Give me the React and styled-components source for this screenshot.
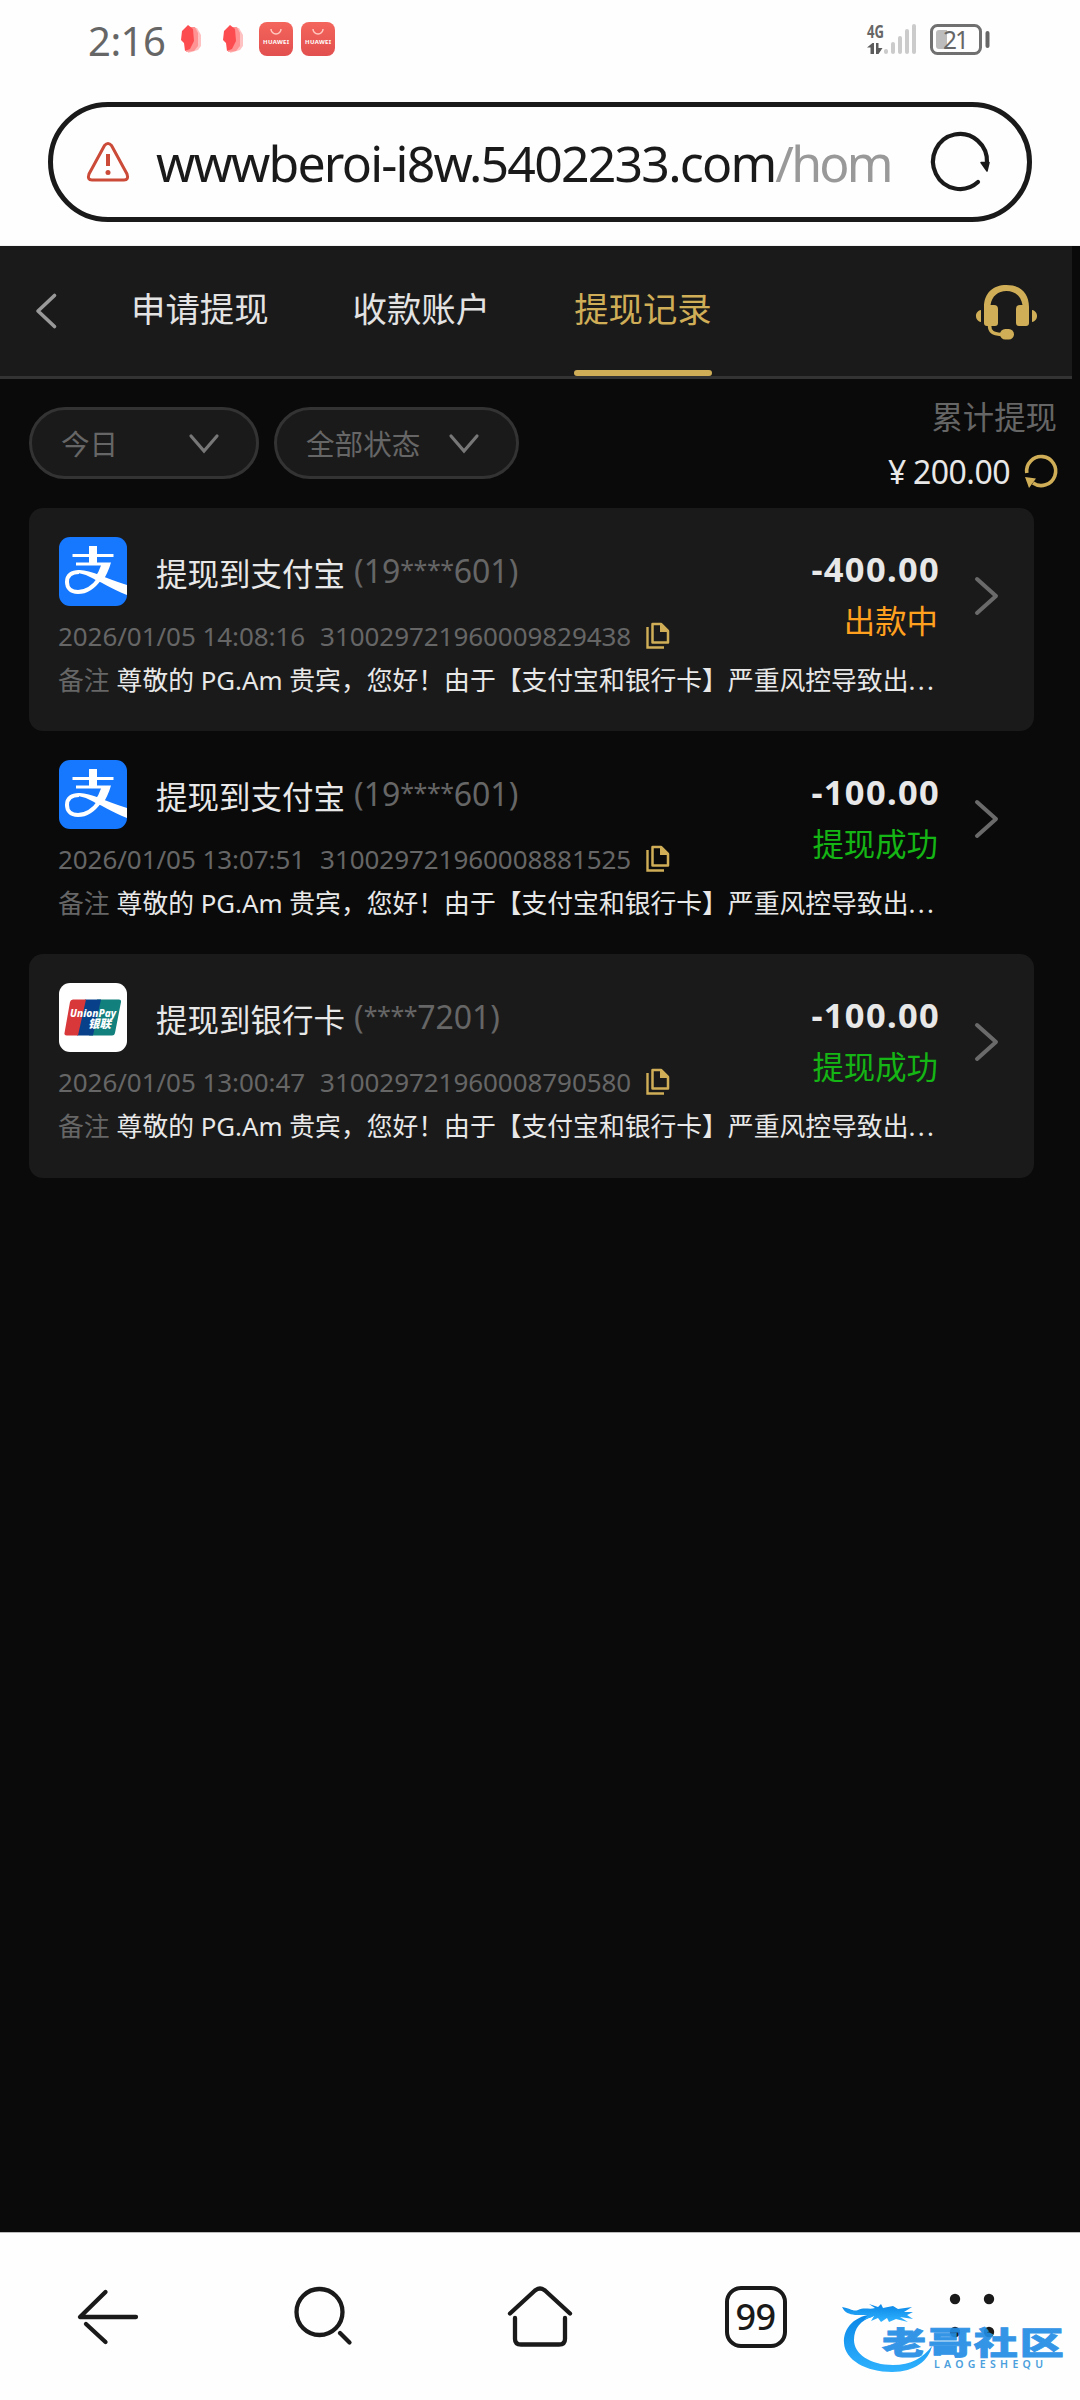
import React from 'react';
import styled, { createGlobalStyle } from 'styled-components';

const GlobalStyle = createGlobalStyle`
  body {
    margin: 0;
    background: #0a0a0a;
    font-family: "Noto Sans", "Noto Sans CJK SC", sans-serif;
  }
  * { box-sizing: border-box; }
  svg { display: block; flex: none; overflow: visible; }
`;

const Screen = styled.div`
  width: 1080px;
  height: 2400px;
  display: flex;
  flex-direction: column;
  overflow: hidden;
  background: #0a0a0a;
`;

/* phone status bar */
const StatusBar = styled.div`
  height: 102px;
  padding: 22px 90px 0 88px;
  display: flex;
  align-items: flex-start;
  background: #fefefe;
`;

const Clock = styled.span`
  width: 93px;
  font-size: 40px;
  line-height: 38px;
  letter-spacing: -0.5px;
  color: #666;
`;

const AppIcons = styled.div`
  display: flex;
  gap: 8px;
  flex: 1;
`;

const Huawei = styled.div`
  width: 34px;
  height: 34px;
  border-radius: 8px;
  background: linear-gradient(#f4655c, #e2504f);
`;

const Battery = styled.div`
  margin-left: 12px;
  display: flex;
`;

/* browser address bar */
const AddressArea = styled.div`
  height: 144px;
  padding: 0 48px;
  background: #fefefe;
  border-bottom: 1px solid #f2f2f2;
`;

const AddressBar = styled.div`
  height: 120px;
  padding: 0 36px 0 33px;
  display: flex;
  align-items: center;
  border: 5px solid #1a1a1a;
  border-radius: 60px;
`;

const Url = styled.div`
  flex: 1;
  margin-left: 26px;
  padding-top: 2px;
  font-size: 50px;
  line-height: 60px;
  white-space: nowrap;
  color: #1a1a1a;
  letter-spacing: -1.8px;
  span { color: #999; letter-spacing: -2.800px; }
`;

/* page header */
const Header = styled.div`
  width: 1072px;
  height: 133px;
  padding: 0 35px;
  display: flex;
  background: #1a1a1a;
  border-bottom: 3px solid #333;
`;

const Tabs = styled.div`
  display: flex;
  gap: 84px;
  margin-left: 73px;
  flex: 1;
`;

const Tab = styled.div`
  height: 130px;
  padding-top: 38px;
  font-size: 34.4px;
  line-height: 50px;
  color: ${props => props.$active ? '#cfae57' : '#e3e3e3'};
  display: flex;
  flex-direction: column;
  justify-content: space-between;
  &::after {
    content: '';
    height: 6px;
    border-radius: 3px;
    background: ${props => props.$active ? '#cfae57' : 'transparent'};
  }
`;

const Filters = styled.div`
  height: 129px;
  padding: 0 23px 0 29px;
  display: flex;
  align-items: flex-start;
`;

const Select = styled.div`
  width: ${props => props.$width}px;
  height: 72px;
  margin: 28px 15px 0 0;
  padding: 1px 37px 0 29px;
  display: flex;
  align-items: center;
  justify-content: space-between;
  background: #1a1a1a;
  border: 3px solid #333;
  border-radius: 36px;
  font-size: 28.6px;
  line-height: 40px;
  color: #666;
`;

const Totals = styled.div`
  margin-left: auto;
  padding-top: 16px;
  display: flex;
  flex-direction: column;
  align-items: flex-end;
`;

const TotalLabel = styled.div`
  font-size: 31.4px;
  line-height: 44px;
  color: #666;
`;

const TotalValue = styled.div`
  height: 40px;
  margin: 13px -1px 0 0;
  display: flex;
  align-items: center;
  font-size: 32px;
  line-height: 40px;
  letter-spacing: -0.5px;
  color: #e8e8e8;
  i { font-style: normal; margin-right: 7px; }
  svg { margin-left: 15px; }
`;

/* records */
const List = styled.div`
  flex: 1;
  padding-left: 29px;
`;

const Card = styled.div`
  width: 1005px;
  height: 223.200px;
  padding: 29px 35px 0 29px;
  display: flex;
  border-radius: 14px;
  background: ${props => props.$shaded ? '#1a1a1a' : 'transparent'};
`;

const Details = styled.div`
  flex: 1;
  min-width: 0;
`;

const TopRow = styled.div`
  display: flex;
  height: 123px;
`;

const Info = styled.div`
  flex: 1;
`;

const TitleRow = styled.div`
  display: flex;
  align-items: center;
  height: 69px;
  padding-left: 1px;
  font-size: 31.5px;
  white-space: nowrap;
  color: #e8e8e8;
`;

const Title = styled.span`
  margin-left: 29px;
`;

const Account = styled.span`
  margin-left: 9px;
  font-size: 32px;
  line-height: 44px;
  color: #666;
`;

const Stars = styled.span`
  font-size: 25px;
  letter-spacing: -0.4px;
  position: relative;
  top: -4px;
`;

const MetaRow = styled.div`
  display: flex;
  align-items: center;
  margin-top: 14px;
  height: 32px;
  font-size: 26px;
  letter-spacing: -0.06px;
  color: #666;
`;

const OrderNo = styled.span`
  margin: 0 15px 0 15px;
`;

const AmountCol = styled.div`
  padding-top: 8px;
  text-align: right;
`;

const Amount = styled.div`
  margin-right: -2px;
  font-size: 34.5px;
  line-height: 48px;
  font-weight: 700;
  letter-spacing: 1.3px;
  color: #e8e8e8;
`;

const Status = styled.div`
  margin-top: 4px;
  font-size: 31.4px;
  line-height: 48px;
  color: ${props => props.$done ? '#14b514' : '#ffa01f'};
`;

const Remark = styled.div`
  font-size: 25.8px;
  line-height: 40px;
  white-space: nowrap;
  color: #e8e8e8;
`;

const RemarkLabel = styled.span`
  color: #666;
  margin-right: 7px;
`;

const Dots = styled.span`
  letter-spacing: 2.400px;
`;

const Arrow = styled.div`
  margin: 39px 0 0 36px;
`;

/* browser toolbar */
const Toolbar = styled.div`
  position: relative;
  height: 168px;
  padding: 50px 74px 0;
  display: flex;
  justify-content: space-between;
  background: #fefefe;
  border-top: 1px solid #bbb;
`;

const TabCount = styled.div`
  width: 62px;
  height: 62px;
  margin: 3px 2px 0 -2px;
  display: flex;
  align-items: center;
  justify-content: center;
  border: 4px solid #1a1a1a;
  border-radius: 16px;
  font-size: 36px;
  font-weight: 500;
  line-height: 40px;
  letter-spacing: -0.7px;
  color: #1a1a1a;
`;

const Watermark = styled.div`
  position: absolute;
  left: 838px;
  top: 68px;
`;

const Leaf = ({ width }) => (
  <svg width={width} height="34" viewBox={`0 0 ${width} 34`}>
    <path d="M11 6L16 6L20 13L20 24L17 28L7 31Z" fill="#ffc2c2" />
    <path d="M9 5L14 5L17 11L17 24L13 29L5 30Z" fill="#ff9292" />
    <path d="M7 3L12 7L13 19L9 27L4 29L3 21L0 18L1 9Z" fill="#fd4c50" />
  </svg>
);

const HuaweiIcon = () => (
  <Huawei>
    <svg width="34" height="34" viewBox="0 0 34 34">
      <path d="M12 7A5 5 0 0 0 22 7" fill="none" stroke="#ffc9c0" strokeWidth="1.5" />
      <text x="4" y="22" fontSize="6" fontWeight="700" fill="#fff" textLength="26">HUAWEI</text>
    </svg>
  </Huawei>
);

const Signal = () => (
  <svg width="52" height="34" viewBox="0 0 52 34">
    <text x="1" y="15.500" fontSize="18" fontWeight="700" fill="#666" textLength="17" lengthAdjust="spacingAndGlyphs">4G</text>
    <path d="M4.500 32V25.500H1L6.500 21H8V32ZM10 21H12.500V26H16.500L12.500 32H10Z" fill="#5c5c5c" />
    <g stroke="#cbcbcb" strokeWidth="4" strokeLinecap="round">
      <path d="M20 29V30M27 22V30M34 16V30M41 9V30M48 4V30" />
    </g>
  </svg>
);

const BatteryIcon = () => (
  <svg width="60" height="34" viewBox="0 0 60 34">
    <rect x="1.5" y="3.5" width="49" height="28" rx="6" fill="none" stroke="#707070" strokeWidth="3" />
    <path d="M9 8H17V27H9A3 3 0 0 1 6 24V11A3 3 0 0 1 9 8Z" fill="#bcbcbc" />
    <rect x="55.500" y="9" width="4" height="17" rx="2" fill="#666" />
    <text x="13" y="26.500" fontSize="24.5" fill="#666" textLength="26">21</text>
  </svg>
);

const WarnIcon = () => (
  <svg width="44" height="40" viewBox="0 0 44 40">
    <path d="M18.500 3.500Q22 -.5 25.500 3.500L41 32Q43 38 38 38H6Q1 38 3 32Z" fill="none" stroke="#cb4a38" strokeWidth="3" strokeLinejoin="round" />
    <path d="M22 12V24" stroke="#cb4a38" strokeWidth="4" />
    <circle cx="22" cy="30.500" r="2.500" fill="#cb4a38" />
  </svg>
);

const ReloadIcon = () => (
  <svg width="60" height="60" viewBox="0 0 60 60">
    <path d="M47 50A27 27.500 0 1 1 56 31" fill="none" stroke="#1a1a1a" strokeWidth="4.200" strokeLinecap="round" />
    <path d="M50 30.500H58L56 39Z" fill="#1a1a1a" stroke="#1a1a1a" strokeWidth="1.500" strokeLinejoin="round" />
  </svg>
);

const BackIcon = () => (
  <svg width="23" height="130" viewBox="0 0 23 130">
    <path d="M19.500 49.500L3 65L19.500 80.500" fill="none" stroke="#999" strokeWidth="3.600" strokeLinecap="round" strokeLinejoin="round" />
  </svg>
);

const Headset = () => (
  <svg width="61" height="96" viewBox="0 -39 61 96">
    <g fill="#cfae57">
      <path d="M5 25V37C-1.700 36 -1.700 26 5 25ZM56 25V37C62.700 36 62.700 26 56 25Z" />
      <path d="M8 38V22C8 8 17 0 30.500 0C44 0 53 8 53 22V38Q53 41 50 41H43Q40 41 40 38V24Q40 20 44 20H46.500C45 11 39 6 30.500 6C22 6 16 11 14.500 20H18Q22 20 22 24V38Q22 41 19 41H11Q8 41 8 38Z" />
      <rect x="24" y="44" width="14" height="10.500" rx="5.200" />
    </g>
    <path d="M13.500 40C13.500 47 17 49 25 49.500" fill="none" stroke="#cfae57" strokeWidth="3.500" />
  </svg>
);

const ChevronDown = () => (
  <svg width="30" height="20" viewBox="0 0 30 20">
    <path d="M2 2L15 17L28 2" fill="none" stroke="#777" strokeWidth="3.200" strokeLinecap="round" />
  </svg>
);

const ChevronRight = () => (
  <svg width="25" height="40" viewBox="0 0 25 40">
    <path d="M3 3L22 20L3 37" fill="none" stroke="#6a6a6a" strokeWidth="4" strokeLinecap="round" strokeLinejoin="round" />
  </svg>
);

const RefreshIcon = () => (
  <svg width="33" height="34" viewBox="0 0 33 34">
    <path d="M1.800 18A14.500 14.500 0 1 1 8 28" fill="none" stroke="#cfae57" strokeWidth="3.600" />
    <path d="M0 22L11 23.500L4 33Z" fill="#cfae57" />
  </svg>
);

const CopyIcon = () => (
  <svg width="24" height="28" viewBox="0 0 24 28">
    <path d="M1.500 5V25.500H18" fill="none" stroke="#cfae57" strokeWidth="2.400" />
    <path d="M6.500 2H15L22 9V20.500H6.500Z" fill="none" stroke="#cfae57" strokeWidth="2.500" strokeLinejoin="round" />
    <path d="M14 1V10H23Z" fill="#cfae57" />
  </svg>
);

const Alipay = () => (
  <svg width="68" height="69" viewBox="0 0 68 69">
    <rect width="68" height="69" rx="11" fill="#1677ff" />
    <g fill="#fff">
      <path d="M30 9H38V17H54.500V20H38V25.500H52Q49 36 43 45L35 42Q40 35 42 28.500H17V25.500H30V20H13.500V17H30Z" />
      <path d="M19 33C30 32 46 41 68 48V58C53 52 40 44 31 40C25 37 21 36 17 36Z" />
    </g>
    <path d="M41 41C34 51 27 55 19 55C11 55 8 50 8 45C8 38 13 35 20 35" fill="none" stroke="#fff" strokeWidth="4" />
  </svg>
);

const UnionPay = () => (
  <svg width="68" height="69" viewBox="0 0 68 69">
    <rect width="68" height="69" rx="11" fill="#fff" />
    <path d="M16 16.500H60Q62.500 16.500 62 19L56 50Q55.500 52.500 53 52.500H30L38 16.500Z" fill="#12807c" />
    <path d="M26 16.500H42L34 52.500H18Z" fill="#08418a" />
    <path d="M14 16.500H27L19 52.500H7.500Q5 52.500 5.500 50L11 19Q11.500 16.500 14 16.500Z" fill="#d8383a" />
    <text x="11" y="33.500" fontSize="11" fontWeight="800" fontStyle="italic" fill="#fff" textLength="46" lengthAdjust="spacingAndGlyphs">UnionPay</text>
    <text x="29" y="44.500" fontSize="11.500" fontWeight="900" fontStyle="italic" fill="#fff" textLength="23">银联</text>
  </svg>
);

const NavIcon = ({ children }) => (
  <svg width="70" height="70" viewBox="0 0 70 70" fill="none" stroke="#1a1a1a" strokeWidth="4.300" strokeLinecap="round" strokeLinejoin="round">
    {children}
  </svg>
);

const WatermarkArt = () => (
  <svg width="232" height="76" viewBox="0 0 232 76">
    <defs>
      <linearGradient id="wm" x1="0" y1="0" x2="0" y2="1">
        <stop offset="0" stopColor="#0a86e6" />
        <stop offset="1" stopColor="#2fb2ff" />
      </linearGradient>
    </defs>
    <g fill="url(#wm)">
      <path d="M37 13C17 14 5 27 6 42C7 59 28 71 54 71C77 71 91 59 94 45C85 57 73 64 55 64C32 64 16 53 16 39C16 27 23 19 34 16Z" />
      <path d="M4 6C12 7 15 11 20 9C26 6 32 9 37 7L31 3L40 6L43 3L45 7L55 5L60 8L74 6L66 11L75 11L69 14L75 18L62 16L70 21L58 18L51 21L49 17L43 21L40 17L33 20L36 15L26 19L30 14L17 14C11 13 7 12 4 6Z" />
    </g>
    <g transform="translate(44 52.500) scale(1.420 1)">
      <text fontSize="31" fontWeight="900" fill="#238de5" stroke="#238de5" strokeWidth="0.800" textLength="128" opacity="0.92">老哥社区</text>
    </g>
    <text x="96" y="66.500" fontSize="10.500" fontWeight="600" fill="#4b9fdc" textLength="109">LAOGESHEQU</text>
  </svg>
);

const note = '尊敬的 PG.Am 贵宾，您好！由于【支付宝和银行卡】严重风控导致出';

const records = [
  { id: '310029721960009829438', time: '2026/01/05 14:08:16', title: '提现到支付宝', head: '19', tail: '601', amount: '-400.00', status: '出款中', logo: Alipay },
  { id: '310029721960008881525', time: '2026/01/05 13:07:51', title: '提现到支付宝', head: '19', tail: '601', amount: '-100.00', status: '提现成功', done: true, logo: Alipay },
  { id: '310029721960008790580', time: '2026/01/05 13:00:47', title: '提现到银行卡', head: '', tail: '7201', amount: '-100.00', status: '提现成功', done: true, logo: UnionPay }
];

const Record = ({ record, shaded }) => {
  const Logo = record.logo;
  return (
    <Card $shaded={shaded}>
      <Details>
        <TopRow>
          <Info>
            <TitleRow>
              <Logo />
              <Title>{record.title}</Title>
              <Account>({record.head}<Stars>****</Stars>{record.tail})</Account>
            </TitleRow>
            <MetaRow>
              <span>{record.time}</span>
              <OrderNo>{record.id}</OrderNo>
              <CopyIcon />
            </MetaRow>
          </Info>
          <AmountCol>
            <Amount>{record.amount}</Amount>
            <Status $done={record.done}>{record.status}</Status>
          </AmountCol>
        </TopRow>
        <Remark><RemarkLabel>备注</RemarkLabel>{note}<Dots>...</Dots></Remark>
      </Details>
      <Arrow><ChevronRight /></Arrow>
    </Card>
  );
};

export default class App extends React.Component {
  constructor() {
    super();

    this.state = {
      tab: '提现记录'
    };
  }

  render() {
    const tabs = ['申请提现', '收款账户', '提现记录'].map(name => (
      <Tab key={name} $active={name === this.state.tab} onClick={() => this.setState({ tab: name })}>{name}</Tab>
    ));

    return (
      <Screen>
        <GlobalStyle />
        <StatusBar>
          <Clock>2:16</Clock>
          <AppIcons>
            <Leaf width={34} />
            <Leaf width={28} />
            <HuaweiIcon />
            <HuaweiIcon />
          </AppIcons>
          <Signal />
          <Battery><BatteryIcon /></Battery>
        </StatusBar>
        <AddressArea>
          <AddressBar>
            <WarnIcon />
            <Url>wwwberoi-i8w.5402233.com<span>/hom</span></Url>
            <ReloadIcon />
          </AddressBar>
        </AddressArea>
        <Header>
          <BackIcon />
          <Tabs>{tabs}</Tabs>
          <Headset />
        </Header>
        <Filters>
          <Select $width={230}>今日<ChevronDown /></Select>
          <Select $width={245}>全部状态<ChevronDown /></Select>
          <Totals>
            <TotalLabel>累计提现</TotalLabel>
            <TotalValue><i>¥</i>200.00<RefreshIcon /></TotalValue>
          </Totals>
        </Filters>
        <List>
          {records.map((record, i) => <Record key={record.id} record={record} shaded={i % 2 === 0} />)}
        </List>
        <Toolbar>
          <NavIcon>
            <path d="M31.500 9L6 34H62M31.500 59L12 41" />
          </NavIcon>
          <NavIcon>
            <ellipse cx="27.500" cy="29" rx="23" ry="23" />
            <path d="M48 50L57.500 59.500" />
          </NavIcon>
          <NavIcon>
            <path d="M1 30.500L26 7.500Q31 3.500 36 7.500L61 30.500M6 35V56Q6 61.500 12 61.500H50Q56 61.500 56 56V35" />
          </NavIcon>
          <TabCount>99</TabCount>
          <NavIcon>
            <g fill="#1a1a1a" stroke="none">
              <circle cx="19" cy="16" r="5.200" />
              <circle cx="53" cy="16" r="5.200" />
              <circle cx="19" cy="49" r="5.200" />
              <circle cx="53" cy="49" r="5.200" />
            </g>
          </NavIcon>
          <Watermark><WatermarkArt /></Watermark>
        </Toolbar>
      </Screen>
    );
  }
}
